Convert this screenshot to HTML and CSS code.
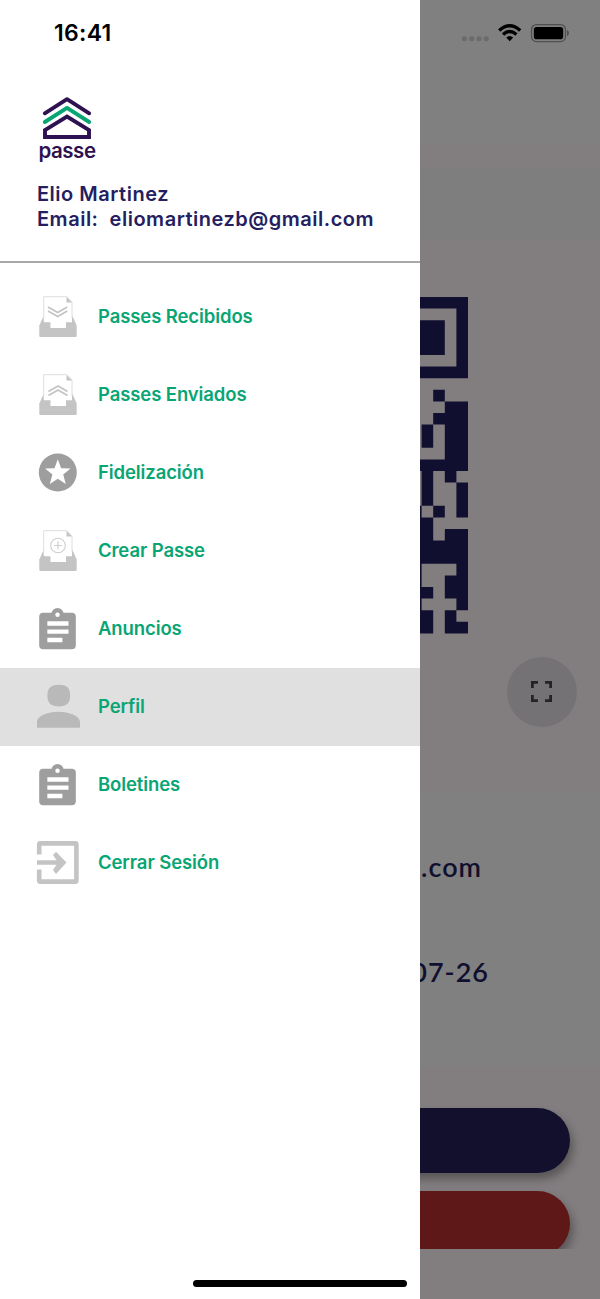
FILE: index.html
```
<!DOCTYPE html>
<html lang="es">
    <head>
        <meta charset="UTF-8">
        <meta name="viewport" content="width=device-width,initial-scale=1" />
        <title>Passe</title>
        <link rel="stylesheet" href="styles.css">
    </head>
    <body>
        <svg width="0" height="0" class="defs">
            <defs>
                <g id="tray">
                    <path d="M8 21L3.3 31.5V42Q3.3 43 4.3 43H39.7Q40.7 43 40.7 42V31.5L36 21Z" fill="#c4c4c4"/>
                    <path d="M7.7 2.7H31L36 8V28.3H30V34H14.5V28.3H9Q7.7 28.3 7.7 27Z" fill="#fff"/>
                    <path d="M7.7 24V2.7H31L36 8V24" fill="none" stroke="#dedede"/>
                    <path d="M30.5 3V8.5H36Z" fill="#c4c4c4"/>
                </g>
                <g id="clipboard">
                    <path d="M19 3H5a2 2 0 0 0-2 2v14a2 2 0 0 0 2 2h14a2 2 0 0 0 2-2V5a2 2 0 0 0-2-2z" fill="#9e9e9e"/>
                    <circle cx="12" cy="3.7" r="3" fill="#9e9e9e"/>
                    <circle cx="12" cy="4" r="1.1" fill="#fff"/>
                    <path d="M7 7.2h10.4v2.2H7zM7 11.2h10.4v2.2H7zM7 15.3h7.4v2.2H7z" fill="#fff"/>
                </g>
            </defs>
        </svg>
        <div class="phone">
            <div class="screen">
                <div class="bar"></div>
                <div class="strip"></div>
                <div class="tabs"></div>
                <div class="code">
                    <svg class="qr" viewBox="0 0 5 29" width="58" height="336.4">
                        <path d="M0 0h5v7H0V6h4V1H0zM0 2h3v3H0z
                            M2 8h1v1H2zM3 9h2v6H3zM2 10h1v1H2zM1 11h1v2H1zM0 14h5v1H0z
                            M1 15h1v3H1zM3 15h1v1H3zM4 16h1v3H4zM0 18h1v11H0zM2 18h1v1H2z
                            M1 19h1v4H1zM3 20h2v3H3zM2 21h1v2H2zM4 23h1v4H4zM3 24h1v2H3z
                            M1 25h1v1H1zM1 27h1v2H1zM3 27h1v2H3zM4 28h1v1H4z"/>
                    </svg>
                    <div class="expand">
                        <svg viewBox="0 0 21 21" width="21" height="21">
                            <path d="M1.4 7V1.4H7M14 1.4h5.6V7M19.6 14v5.6H14M7 19.6H1.4V14" fill="none" stroke="#4d444b" stroke-width="2.8"/>
                        </svg>
                    </div>
                </div>
                <div class="info">
                    <p class="mail">.com</p>
                    <p class="date">07-26</p>
                </div>
                <div class="actions">
                    <div class="btn"></div>
                    <div class="btn red"></div>
                </div>
            </div>
            <div class="mask"></div>
            <div class="drawer">
                <div class="header">
                    <svg class="logo" viewBox="0 0 60 70" width="60" height="70">
                        <g fill="none" stroke-width="3.9" stroke-linecap="round" stroke-linejoin="round">
                            <path d="M7.8 19.3L30 5.2L52.2 19.3" stroke="#2e1150"/>
                            <path d="M7.8 28L30 13.9L52.2 28" stroke="#09a574"/>
                            <path d="M8 43V36L30 22.5L52 36V43Z" stroke="#2e1150" stroke-linejoin="miter"/>
                        </g>
                        <text x="1.5" y="64.3" textLength="57.5" class="brand">passe</text>
                    </svg>
                    <p class="name">Elio Martinez</p>
                    <p class="email">Email:&nbsp; eliomartinezb@gmail.com</p>
                </div>
                <ul class="nav">
                    <li class="item">
                        <svg viewBox="0 0 44 44"><use href="#tray"/><path d="M12 13L21.7 18.5L31.3 13M12 17L21.7 22.5L31.3 17" fill="none" stroke="#c4c4c4" stroke-width="1.7"/></svg>
                        <span>Passes Recibidos</span>
                    </li>
                    <li class="item">
                        <svg viewBox="0 0 44 44"><use href="#tray"/><path d="M12.5 19.5L22 14L31.5 19.5M12.5 23.5L22 18L31.5 23.5" fill="none" stroke="#c4c4c4" stroke-width="1.7"/></svg>
                        <span>Passes Enviados</span>
                    </li>
                    <li class="item">
                        <svg viewBox="0 0 44 44"><circle cx="21.8" cy="22.5" r="19" fill="#9e9e9e"/><path d="M21.8 9.3L25.1 18.2L34.6 18.6L27.2 24.5L29.8 34.1L21.8 28.7L13.8 34.1L16.4 24.5L9 18.6L18.5 18.2Z" fill="#fff"/></svg>
                        <span>Fidelización</span>
                    </li>
                    <li class="item">
                        <svg viewBox="0 0 44 44"><use href="#tray"/><path d="M22 13.5V21.5M18 17.5H26" stroke="#d0d0d0" stroke-width="1.2"/><circle cx="22" cy="17.5" r="7.3" fill="none" stroke="#d0d0d0" stroke-width="1.1"/></svg>
                        <span>Crear Passe</span>
                    </li>
                    <li class="item">
                        <svg viewBox="0 0 44 44"><use href="#clipboard" transform="translate(-2.9 .6) scale(2.035)"/></svg>
                        <span>Anuncios</span>
                    </li>
                    <li class="item active">
                        <svg viewBox="0 0 44 44"><path d="M23 .8C31 .8 34.2 4 34.2 11.8C34.2 19.5 30 22.5 23 22.5C15.5 22.5 11.4 19.5 11.4 11.8C11.4 4 15 .8 23 .8ZM1 43.8V38C1 32 12 27.8 22.5 27.8C33 27.8 44 32 44 38V43.8Z" fill="#b9b9b9"/></svg>
                        <span>Perfil</span>
                    </li>
                    <li class="item">
                        <svg viewBox="0 0 44 44"><use href="#clipboard" transform="translate(-2.9 .6) scale(2.035)"/></svg>
                        <span>Boletines</span>
                    </li>
                    <li class="item">
                        <svg viewBox="0 0 44 44"><path d="M3.2 14.5V4.5Q3.2 3.4 4.2 3.4H39.3Q40.4 3.4 40.4 4.5V40.5Q40.4 41.6 39.3 41.6H4.2Q3.2 41.6 3.2 40.5V29.5" fill="none" stroke="#c4c4c4" stroke-width="4.6"/><path d="M1 20.2H20.5L17 15L20 11.7L30.5 22.5L20 34L17 30L20.5 24.8H1Z" fill="#c4c4c4"/></svg>
                        <span>Cerrar Sesión</span>
                    </li>
                </ul>
            </div>
            <div class="status">
                <span class="time">16:41</span>
                <svg viewBox="0 0 110 22" width="110" height="22">
                    <g fill="#6b6b6b">
                        <rect x="2" y="14.3" width="5" height="5" rx="2"/>
                        <rect x="9.2" y="14.3" width="5" height="5" rx="2"/>
                        <rect x="16.5" y="14.3" width="5" height="5" rx="2"/>
                        <rect x="23.8" y="14.3" width="5" height="5" rx="2"/>
                    </g>
                    <g fill="none" stroke="#000" stroke-width="3.4">
                        <path d="M39.2 8.4Q49.7 -1 60.2 8.4"/>
                        <path d="M43 12.5Q49.7 6.6 56.4 12.5"/>
                    </g>
                    <path d="M46.2 15.6Q49.7 12.4 53.2 15.6L49.7 19.3Z"/>
                    <rect x="71.5" y="2.6" width="34" height="17" rx="5" fill="none" stroke="#4f4f4f" stroke-width="1.3"/>
                    <rect x="73.8" y="5" width="29.4" height="12.2" rx="2.8"/>
                    <path d="M107 8V14Q109 13 109 11T107 8Z" fill="#4f4f4f"/>
                </svg>
            </div>
            <div class="home"></div>
        </div>
    </body>
</html>
```
FILE: styles.css
```
*{
    margin: 0;
    padding: 0;
    box-sizing: border-box;
}
body{
    font-family: Inter, "Liberation Sans", sans-serif;
}
.defs {
    position: absolute;
}
.phone {
    position: relative;
    width: 600px;
    height: 1299px;
    overflow: hidden;
}

/* screen behind the menu */
.screen {
    height: 1299px;
    background: #fff5fa;
}
.bar {
    height: 145px;
    background: #fbfbfb;
}
.strip {
    height: 22px;
}
.tabs {
    height: 73px;
    background: #f8f8f8;
}
.code {
    height: 552px;
    padding: 57.3px 23.5px 0 410px;
}
.qr {
    display: block;
    fill: #221f5c;
}
.expand {
    display: flex;
    align-items: center;
    justify-content: center;
    width: 70px;
    height: 70px;
    margin: 23.3px 0 0 auto;
    border-radius: 50%;
    background: #e5e0e8;
}
.info {
    height: 274px;
    background: #fafbfa;
    font-family: Lato, sans-serif;
    font-size: 27px;
    font-weight: 600;
    line-height: 40px;
    color: #221f5c;
    text-align: right;
}
.mail {
    padding: 55px 118px 0 0;
    letter-spacing: 1px;
}
.date {
    padding: 65px 111px 0 0;
    letter-spacing: 1px;
}
.actions {
    height: 183px;
    padding: 42px 30px 0 30px;
    overflow: hidden;
}
.btn {
    height: 65px;
    margin-bottom: 18px;
    border-radius: 33px;
    background: #242058;
    box-shadow: 3px 6px 10px rgba(0,0,0,.32);
}
.btn.red {
    background: #bb2f30;
}
.mask {
    position: absolute;
    top: 0;
    left: 0;
    width: 100%;
    height: 100%;
    background: rgba(0,0,0,.49);
}

/* drawer */
.drawer {
    position: absolute;
    top: 0;
    left: 0;
    width: 420px;
    height: 100%;
    background: #fff;
}
.header {
    height: 263px;
    padding: 94px 0 0 37px;
    border-bottom: 2px solid #a9a9a9;
    font-size: 20px;
    font-weight: 600;
    line-height: 25px;
    color: #24205f;
    white-space: nowrap;
}
.logo {
    display: block;
    margin-bottom: 18px;
}
.brand {
    font-family: Inter, sans-serif;
    font-size: 20.5px;
    font-weight: 600;
    fill: #2e1150;
}
.name, .email {
    letter-spacing: .51px;
}
.nav {
    padding-top: 15px;
    list-style: none;
}
.item {
    display: flex;
    align-items: center;
    height: 78px;
    padding: 0 0 2px 36px;
    font-size: 18.5px;
    font-weight: 600;
    letter-spacing: -.1px;
    color: #09a574;
}
.item svg {
    width: 44px;
    height: 44px;
    margin-right: 18px;
}
.active {
    background: #e0e0e0;
}

.status {
    position: absolute;
    top: 22px;
    left: 54px;
    display: flex;
    width: 516px;
    justify-content: space-between;
    line-height: 23px;
}
.time {
    font-size: 23px;
    font-weight: 600;
    letter-spacing: .3px;
}
.home {
    position: absolute;
    left: 193px;
    top: 1280px;
    width: 214px;
    height: 7px;
    border-radius: 4px;
    background: #000;
}
```
